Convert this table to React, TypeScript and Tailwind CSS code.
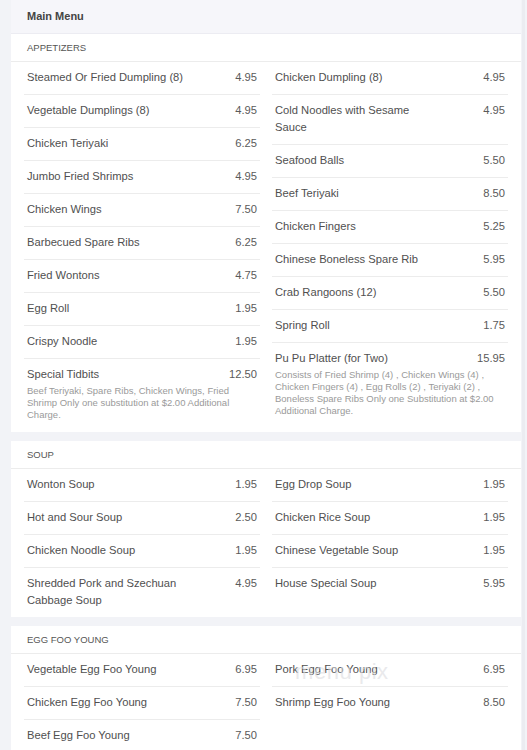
type Item = { name: string; price: string; desc?: string };
type Section = { title: string; left: Item[]; right: Item[] };

const sections: Section[] = [
  {
    title: "APPETIZERS",
    left: [
      { name: "Steamed Or Fried Dumpling (8)", price: "4.95" },
      { name: "Vegetable Dumplings (8)", price: "4.95" },
      { name: "Chicken Teriyaki", price: "6.25" },
      { name: "Jumbo Fried Shrimps", price: "4.95" },
      { name: "Chicken Wings", price: "7.50" },
      { name: "Barbecued Spare Ribs", price: "6.25" },
      { name: "Fried Wontons", price: "4.75" },
      { name: "Egg Roll", price: "1.95" },
      { name: "Crispy Noodle", price: "1.95" },
      {
        name: "Special Tidbits",
        price: "12.50",
        desc: "Beef Teriyaki, Spare Ribs, Chicken Wings, Fried Shrimp Only one substitution at $2.00 Additional Charge.",
      },
    ],
    right: [
      { name: "Chicken Dumpling (8)", price: "4.95" },
      { name: "Cold Noodles with Sesame Sauce", price: "4.95" },
      { name: "Seafood Balls", price: "5.50" },
      { name: "Beef Teriyaki", price: "8.50" },
      { name: "Chicken Fingers", price: "5.25" },
      { name: "Chinese Boneless Spare Rib", price: "5.95" },
      { name: "Crab Rangoons (12)", price: "5.50" },
      { name: "Spring Roll", price: "1.75" },
      {
        name: "Pu Pu Platter (for Two)",
        price: "15.95",
        desc: "Consists of Fried Shrimp (4) , Chicken Wings (4) , Chicken Fingers (4) , Egg Rolls (2) , Teriyaki (2) , Boneless Spare Ribs Only one Substitution at $2.00 Additional Charge.",
      },
    ],
  },
  {
    title: "SOUP",
    left: [
      { name: "Wonton Soup", price: "1.95" },
      { name: "Hot and Sour Soup", price: "2.50" },
      { name: "Chicken Noodle Soup", price: "1.95" },
      { name: "Shredded Pork and Szechuan Cabbage Soup", price: "4.95" },
    ],
    right: [
      { name: "Egg Drop Soup", price: "1.95" },
      { name: "Chicken Rice Soup", price: "1.95" },
      { name: "Chinese Vegetable Soup", price: "1.95" },
      { name: "House Special Soup", price: "5.95" },
    ],
  },
  {
    title: "EGG FOO YOUNG",
    left: [
      { name: "Vegetable Egg Foo Young", price: "6.95" },
      { name: "Chicken Egg Foo Young", price: "7.50" },
      { name: "Beef Egg Foo Young", price: "7.50" },
    ],
    right: [
      { name: "Pork Egg Foo Young", price: "6.95" },
      { name: "Shrimp Egg Foo Young", price: "8.50" },
    ],
  },
];

const Row = ({ item, last }: { item: Item; last: boolean }) => (
  <div
    className={
      "px-[3px] pt-[7px] " +
      (item.desc ? "pb-[11px] " : "pb-2 ") +
      (last ? "" : "border-b border-[#ececec]")
    }
  >
    <div className="flex items-start justify-between gap-4 text-[11.2px] leading-[17px] text-[#505050]">
      <span className="max-w-[162px]">{item.name}</span>
      <span className="text-[#5a5a5a]">{item.price}</span>
    </div>
    {item.desc && (
      <p className="mt-[2px] text-[9.5px] leading-[12px] text-[#9a9a9a]">
        {item.desc}
      </p>
    )}
  </div>
);

const Column = ({ items }: { items: Item[] }) => (
  <div className="flex flex-col">
    {items.map((it, i) => (
      <Row key={it.name} item={it} last={i === items.length - 1} />
    ))}
  </div>
);

const MenuSection = ({ section }: { section: Section }) => (
  <div className="bg-white">
    <div className="flex h-[28px] items-center border-b border-[#ececec] px-4 pt-px text-[9.5px] text-[#555]">
      {section.title}
    </div>
    <div className="grid grid-cols-2 gap-x-3 px-[13px]">
      <Column items={section.left} />
      <Column items={section.right} />
    </div>
  </div>
);

export default function App() {
  return (
    <div
      className="relative flex min-h-[750px] bg-[#f2f3f7]"
      style={{ fontFamily: '"Liberation Sans", Arial, sans-serif' }}
    >
      <div className="ml-[11px] flex w-[510px] flex-col gap-[9px]">
        <div>
          <div className="flex h-[34px] items-center border-b border-[#ececf2] bg-[#f6f6fa] px-4 text-[11px] font-bold text-[#444]">
            Main Menu
          </div>
          <MenuSection section={sections[0]} />
        </div>
        <MenuSection section={sections[1]} />
        <MenuSection section={sections[2]} />
      </div>
      <div className="ml-px w-[3px] bg-[#ebecf1]" />
      <span className="pointer-events-none absolute left-[295px] top-[655px] text-[22px] tracking-wide text-[#dcdce0] opacity-60">
        menu pix
      </span>
    </div>
  );
}
